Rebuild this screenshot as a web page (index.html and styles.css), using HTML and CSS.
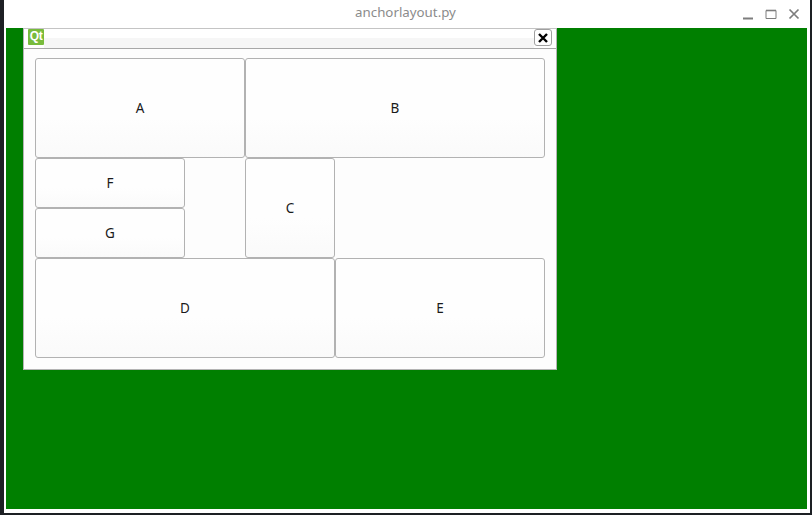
FILE: index.html
```html
<!DOCTYPE html>
<html lang="en">
<head>
    <meta charset="UTF-8">
    <title>anchorlayout.py</title>
    <link rel="stylesheet" href="styles.css">
</head>
<body>

    <div class="window">
        <div class="titlebar">
            <div class="title">anchorlayout.py</div>
            <div class="controls">
                <svg width="12" height="12" viewBox="0 0 12 12"><path d="M1 10.5h10" stroke="#7d7d7d" stroke-width="2"/></svg>
                <svg width="12" height="12" viewBox="0 0 12 12"><path d="M1 2.5h10v8H1z" fill="none" stroke="#7d7d7d"/><path d="M1 2.5h10" stroke="#7d7d7d" stroke-width="1.6"/></svg>
                <svg width="12" height="12" viewBox="0 0 12 12"><path d="M1.5 1.5l9 9M10.5 1.5l-9 9" stroke="#7d7d7d" stroke-width="1.7"/></svg>
            </div>
        </div>

        <div class="mdi-area">
            <div class="subwindow">
                <div class="subwindow-title">
                    <div class="qt-logo">Qt</div>
                    <div class="title-line"></div>
                    <div class="close-btn">
                        <svg width="12" height="12" viewBox="0 0 12 12"><path d="M2 2l8 8M10 2l-8 8" stroke="#000" stroke-width="2.4"/></svg>
                    </div>
                </div>
                <div class="grid">
                    <button class="btn a">A</button>
                    <button class="btn b">B</button>
                    <button class="btn f">F</button>
                    <button class="btn g">G</button>
                    <button class="btn c">C</button>
                    <button class="btn d">D</button>
                    <button class="btn e">E</button>
                </div>
            </div>
        </div>
    </div>

</body>
</html>
```

FILE: styles.css
```css
html, body {
    margin: 0;
    height: 515px;
    overflow: hidden;
}
body {
    background-color: #1d2024;
    font-family: "Noto Sans", sans-serif;
    padding: 0 2px 2px 4px;
    box-sizing: border-box;
}
.window {
    height: 100%;
    background-color: #fff;
    padding: 0 3px 4px 2px;
    box-sizing: border-box;
    display: flex;
    flex-direction: column;
}
.titlebar {
    height: 28px;
    flex: none;
    display: flex;
    align-items: center;
    justify-content: center;
    position: relative;
    padding-bottom: 4px;
    box-sizing: border-box;
}
.title {
    color: #8b8b8b;
    font-size: 13.3px;
    margin-right: 2px;
}
.controls {
    position: absolute;
    right: 7px;
    top: 8px;
    display: flex;
    gap: 11px;
}
.controls svg {
    display: block;
}
.mdi-area {
    flex: 1;
    background-color: #007f00;
    position: relative;
}
.subwindow {
    position: absolute;
    left: 17px;
    top: 0;
    width: 534px;
    height: 342px;
    background-color: #fdfdfd;
    border: 1px solid #b4b4b4;
    border-top-color: #c4c4c4;
    box-sizing: border-box;
}
.subwindow-title {
    height: 19px;
    display: flex;
    align-items: center;
    background-color: #fff;
    border-bottom: 1px solid #a8a8a8;
}
.qt-logo {
    width: 16px;
    height: 16px;
    margin: 0 0 0 4px;
    align-self: flex-start;
    background-color: #78bb3c;
    color: #fff;
    font-family: "Liberation Sans", sans-serif;
    font-size: 12px;
    font-weight: 700;
    letter-spacing: -0.5px;
    line-height: 15px;
    text-align: center;
    border-radius: 1px;
}
.title-line {
    flex: 1;
    height: 10px;
    align-self: flex-end;
    background-color: #f6f6f6;
}
.close-btn {
    width: 18px;
    height: 17px;
    margin: 0 4px 0 0;
    align-self: flex-start;
    border: 1px solid #a0a0a0;
    border-radius: 3px;
    background-color: #fff;
    box-sizing: border-box;
    display: flex;
    align-items: center;
    justify-content: center;
}
.grid {
    display: grid;
    grid-template-columns: 150px 60px 90px 210px;
    grid-template-rows: 100px 50px 50px 100px;
    padding: 9px 11px 0;
}
.btn {
    font-family: inherit;
    font-size: 13.5px;
    color: #1a1a1a;
    padding: 0;
    border: 1px solid #b2b2b2;
    border-radius: 3px;
    background: linear-gradient(#fefefe, #fefefe 60%, #fafafa);
}
.a { grid-column: 1 / 3; grid-row: 1; }
.b { grid-column: 3 / 5; grid-row: 1; }
.f { grid-column: 1; grid-row: 2; }
.g { grid-column: 1; grid-row: 3; }
.c { grid-column: 3; grid-row: 2 / 4; }
.d { grid-column: 1 / 4; grid-row: 4; }
.e { grid-column: 4; grid-row: 4; }
```
